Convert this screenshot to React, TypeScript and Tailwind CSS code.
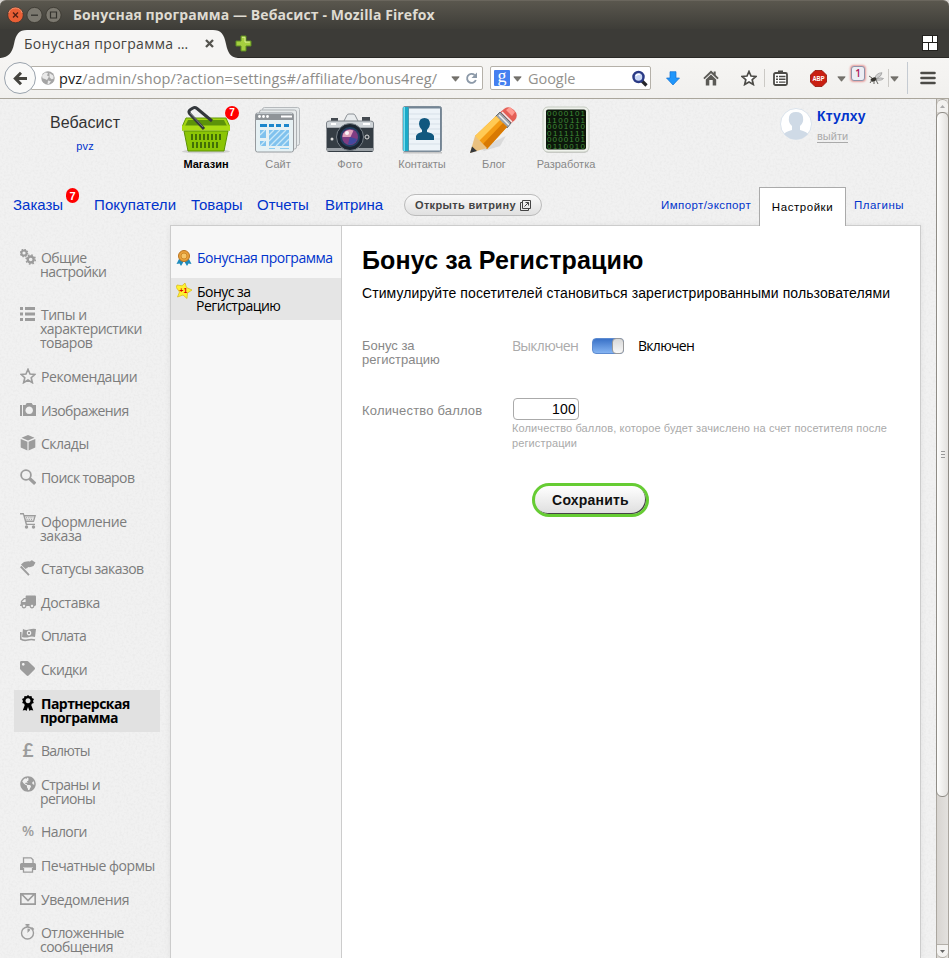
import type { ReactNode } from "react";
import { FaTruck, FaTag, FaGlobeAmericas } from "react-icons/fa";

const UI = "font-['Open_Sans','Noto_Sans',sans-serif]";
const ARIAL = "font-['Liberation_Sans',Arial,sans-serif]";

function Ico({ children, size = 16 }: { children: ReactNode; size?: number }) {
  return (
    <svg width={size} height={size} viewBox="0 0 16 16" fill="currentColor" className="block shrink-0">
      {children}
    </svg>
  );
}

function Caret() {
  return (
    <svg width="9" height="6" viewBox="0 0 9 6" className="block shrink-0">
      <path d="M.8 .8h7.400L4.500 5.300z" fill="#77756f" stroke="#55534e" strokeWidth=".6" />
    </svg>
  );
}

function TitleBar() {
  return (
    <div className="flex h-[29px] shrink-0 items-center rounded-t-[6px] border-t border-[#6a665d] bg-linear-to-b from-[#5a574e] to-[#3e3d38] pl-[7px]">
      <svg width="56" height="18" viewBox="0 0 56 18" className="shrink-0">
        <circle cx="8.5" cy="9" r="7.8" fill="#ea5f35" stroke="#38342f" strokeWidth=".8" />
        <path d="M1.8 7a7 7 0 0 1 13.4 0" fill="none" stroke="#f5906c" strokeWidth="1" />
        <path d="M6 6.5l5 5m0-5l-5 5" stroke="#522013" strokeWidth="1.4" />
        <circle cx="27.5" cy="9" r="7.6" fill="#7c7970" stroke="#38362f" strokeWidth=".8" />
        <path d="M24 9.2h7" stroke="#33322d" strokeWidth="1.3" />
        <circle cx="46.5" cy="9" r="7.6" fill="#7c7970" stroke="#38362f" strokeWidth=".8" />
        <path d="M43.5 6h6v6h-6z" fill="none" stroke="#33322d" strokeWidth="1.2" />
      </svg>
      <span className={`${UI} ml-[10px] text-[14px] leading-[20px] font-bold tracking-[0.1px] whitespace-nowrap text-[#dfdbd2]`}>
        Бонусная программа — Вебасист - Mozilla Firefox
      </span>
    </div>
  );
}

function TabBar() {
  return (
    <div className="flex h-[29px] shrink-0 border-b border-[#2a2926] bg-[#3c3b37]">
      <div className="relative h-[29px] w-[238px] shrink-0">
        <svg width="238" height="30" viewBox="0 0 238 30" className="absolute top-0 left-0">
          <path d="M0 29C9 28 12 24 14 15C16 5 19 1 27 1H213C221 1 224 5 226 15C228 24 230 28 238 29V30H0z" fill="#f6f5f4" />
        </svg>
        <div className="relative flex h-[29px] items-center pl-[24px]">
          <span className={`${UI} w-[166px] text-[14px] leading-[20px] tracking-[0.3px] whitespace-nowrap text-[#45443f]`}>
            Бонусная программа …
          </span>
          <svg width="9" height="9" viewBox="0 0 9 9" className="ml-[15px]">
            <path d="M1 1l7 7M8 1L1 8" stroke="#55544f" strokeWidth="2.3" />
          </svg>
        </div>
      </div>
      <svg width="17" height="17" viewBox="0 0 17 17" className="mt-[6px] -ml-[3px]">
        <path d="M6 1h5v5h5v5h-5v5H6v-5H1V6h5z" fill="#a5cf3f" stroke="#5c8c22" />
        <path d="M7 2.3h3v4.8h4.8" fill="none" stroke="#d9ec92" />
      </svg>
      <svg width="16" height="16" viewBox="0 0 16 16" className="mt-[6px] mr-[11px] ml-auto">
        <path d="M0 0h16v16H0z" fill="#22211e" />
        <path d="M1 1h9v6H1zM11 1h4v6h-4zM1 8h5v7H1zM7 8h8v7H7z" fill="#fff" />
      </svg>
    </div>
  );
}

function Toolbar() {
  return (
    <div className="flex h-[41px] shrink-0 items-center border-b border-[#aaa69c] bg-linear-to-b from-[#f6f5f3] to-[#f1f0ee]">
      <div className="z-10 ml-[4px] flex h-[32px] w-[32px] shrink-0 items-center justify-center rounded-full border border-[#9aa3ad] bg-[#f9f9f8]">
        <svg width="15" height="15" viewBox="0 0 15 15">
          <path d="M14 7.5H3M8 1.8L2.3 7.5L8 13.2" fill="none" stroke="#45443f" strokeWidth="3" />
        </svg>
      </div>
      <div className="-ml-[5px] flex h-[24px] w-[452px] shrink-0 items-center rounded-r-[2px] border border-[#b5b1a9] bg-white">
        <svg width="14" height="14" viewBox="0 0 14 14" className="ml-[9px] shrink-0">
          <circle cx="7" cy="7" r="6.7" fill="#a5a5a5" />
          <path d="M1 4.5l3-3 3 .6-1 2.5 2 .8-2 3.5-2-.8-2.5-.8zM8.5 2l4 2.8v3l-2 .5-2-2zM7 9.5l3 .8-2 2.8-1.500 0z" fill="#e9e9e9" />
        </svg>
        <span className={`${UI} ml-[4px] w-[387px] pt-[2px] text-[14.5px] leading-[20px] tracking-[0.12px] whitespace-nowrap text-[#8d8c89]`}>
          <span className="text-[#222]">pvz</span>/admin/shop/?action=settings#/affiliate/bonus4reg/
        </span>
        <span className="ml-[5px] pt-[2px]"><Caret /></span>
        <svg width="13" height="13" viewBox="0 0 13 13" className="ml-[5px] shrink-0">
          <path d="M9.600 3A4.500 4.500 0 1 0 10.800 8" fill="none" stroke="#8c99a8" strokeWidth="1.900" />
          <path d="M12 .5v5.500H6.500z" fill="#8c99a8" />
        </svg>
      </div>
      <div className="ml-[7px] flex h-[24px] w-[161px] shrink-0 items-center rounded-[2px] border border-[#b5b1a9] bg-white">
        <div className="ml-[3px] flex h-[16px] w-[16px] items-center justify-center rounded-[1px] bg-[#4580f0] font-['Liberation_Serif',serif] text-[18px] leading-[12px] text-white">
          <span className="-mt-[5px]">g</span>
        </div>
        <span className="ml-[3px] pt-[2px]"><Caret /></span>
        <span className={`${UI} ml-[6px] w-[103px] pt-[2px] text-[14.5px] leading-[20px] tracking-[-0.05px] text-[#93918d]`}>Google</span>
        <svg width="17" height="17" viewBox="0 0 17 17" className="shrink-0">
          <path d="M11 11l4.500 4.500" stroke="#26262b" strokeWidth="3.200" />
          <circle cx="7.500" cy="7" r="5" fill="#c9d7f5" stroke="#2b3b86" strokeWidth="2.500" />
          <path d="M5 6a3 3 0 0 1 4-1.500" fill="none" stroke="#fff" strokeWidth="1.500" />
        </svg>
      </div>
      <svg width="14" height="15" viewBox="0 0 14 15" className="ml-[15px] shrink-0">
        <path d="M4 .7h6V7h3.500L7 14 .5 7H4z" fill="#1f96fb" stroke="#1371d3" strokeWidth=".7" />
      </svg>
      <svg width="16" height="16" viewBox="0 0 16 16" className="ml-[23px] shrink-0" fill="#5b5a56">
        <path d="M8 .5L.3 8l1.300 1.300L8 3.200l6.400 6.100L15.700 8l-3-2.900V1.500h-2v1.600z" />
        <path d="M8 4.600L2.800 9.600V15.500H6.300V10h3.400v5.500h3.500V9.600z" />
      </svg>
      <svg width="16" height="16" viewBox="0 0 16 16" className="ml-[22px] shrink-0">
        <path d="M8 1.500l2 4.500 4.900.5-3.700 3.200 1.100 4.800L8 12l-4.300 2.500 1.100-4.800L1.100 6.500 6 6z" fill="#fff" stroke="#4c4b47" strokeWidth="1.700" />
      </svg>
      <div className="ml-[7px] h-[18px] w-px shrink-0 bg-[#cbc9c5]" />
      <svg width="15" height="16" viewBox="0 0 15 16" className="ml-[8px] shrink-0">
        <rect x="1" y="3" width="13" height="12" rx="1.500" fill="#fff" stroke="#4c4b47" strokeWidth="1.800" />
        <path d="M5 .5h5V4H5z" fill="#4c4b47" />
        <path d="M3 6.500h2M3 9.300h2M3 12.100h2M6 6.500h6.500M6 9.300h6.500M6 12.100h6.500" stroke="#4c4b47" strokeWidth="1.400" />
      </svg>
      <svg width="17" height="17" viewBox="0 0 17 17" className="ml-[22px] shrink-0 overflow-visible">
        <path d="M5 .5h7L16.500 5v7L12 16.500H5L.5 12V5z" fill="#c91f12" stroke="#8f1209" strokeWidth=".8" />
        <text x="2.500" y="11.300" textLength="12" lengthAdjust="spacingAndGlyphs" fontSize="8" fontWeight="bold" fontFamily="Liberation Sans" fill="#fff">ABP</text>
      </svg>
      <span className="ml-[10px] pt-[2px]"><Caret /></span>
      <div className="-mt-[9px] ml-[5px] flex h-[15px] w-[14px] shrink-0 items-center justify-center rounded-[3px] border border-[#8f93a8] bg-[#eceef4] font-['Open_Sans',sans-serif] text-[10px] leading-[13px] font-semibold text-[#b01554] shadow-[0_0_2px_1px_#e79b9b]">
        1
      </div>
      <svg width="15" height="13" viewBox="0 0 15 13" className="ml-[4px] shrink-0">
        <path d="M6 6Q7 1 13 .7Q13 4 7 7zM7 7q5-2 7.500-.5Q13 9 7 8z" fill="#cfcfcf" stroke="#8b8b8b" strokeWidth=".6" />
        <ellipse cx="4.500" cy="7.500" rx="3" ry="1.900" fill="#35342f" transform="rotate(-20 4.500 7.500)" />
        <path d="M0 4l3 2M1 11l2-3M5 12V9M9 12L7 8" stroke="#55544f" strokeWidth=".9" />
      </svg>
      <div className="ml-[4px] h-[18px] w-px shrink-0 bg-[#cbc9c5]" />
      <span className="ml-[1px] pt-[2px]"><Caret /></span>
      <div className="ml-[8px] h-[32px] w-px shrink-0 bg-[#c5cbd2]" />
      <svg width="16" height="14" viewBox="0 0 16 14" className="ml-[12px] shrink-0">
        <path d="M1.500 2h13M1.500 7h13M1.500 12h13" stroke="#4c4b47" strokeWidth="2.600" strokeLinecap="round" />
      </svg>
    </div>
  );
}

const BINARY = ["0000101", "1100111", "0001010", "0111111", "0000101", "0110010"];

const apps: { name: string; art: ReactNode }[] = [
  {
    name: "Магазин",
    art: (
      <>
        <ellipse cx="24" cy="45.500" rx="24" ry="2" fill="#bbb" opacity=".6" />
        <path d="M4 12h40l4 9v3H0v-3z" fill="#a3d511" stroke="#63990a" />
        <path d="M6 14h36l3 6H3z" fill="#5c930a" />
        <path d="M2 25h44l-4 20H6z" fill="#8bc505" stroke="#5c9207" />
        <path d="M0 19.500h48v5H0z" fill="#a9dc14" />
        <path d="M10 28v6M14 28v6M18 28v6M22 28v6M26 28v6M30 28v6M34 28v6M38 28v6M11 36v6M15 36v6M19 36v6M23 36v6M27 36v6M31 36v6M35 36v6" stroke="#426f06" strokeWidth="2" />
        <path d="M22 23L7.500 7.500Q6 5 8.500 3.500L11 2Q13 1 15 2.500L30 15" fill="none" stroke="#34383c" strokeWidth="3" strokeLinejoin="round" />
        <path d="M21 21L8 7" stroke="#767b80" />
      </>
    ),
  },
  {
    name: "Сайт",
    art: (
      <>
        <rect x="8.500" y="1.500" width="37" height="38" rx="2" fill="#e6eaeb" stroke="#b5b9bc" />
        <rect x="5.500" y="4" width="37" height="39" rx="2" fill="#e6eaeb" stroke="#adb1b4" />
        <rect x="1.500" y="7" width="38" height="39" rx="2" fill="#e6f1f4" stroke="#969a9e" />
        <path d="M2 8h37v6H2z" fill="#8f9498" />
        <circle cx="5.500" cy="10.500" r="1.400" fill="#fff" /><circle cx="9.500" cy="10.500" r="1.400" fill="#fff" /><circle cx="13.500" cy="10.500" r="1.400" fill="#fff" />
        <path d="M27 9.500h11v2H27z" fill="#fff" />
        <path d="M6 18h7v3H6zM15 18h5v3h-5zM22 18h5v3h-5zM30 18h5v3h-5z" fill="#1b87cc" />
        <path d="M6 24h6v8H6zM6 35h6v5H6zM15 24h20v16H15z" fill="#80c2ee" />
        <path d="M15 29l5-5M15 35l11-11M16 40l16-16M22 40l13-13M28 40l7-7M6 29l5-5M6 40l5-5" stroke="#cbe9f8" strokeWidth="1.300" />
        <path d="M15 42.500h6M26 42.500h9" stroke="#8ecdf1" />
      </>
    ),
  },
  {
    name: "Фото",
    art: (
      <>
        <path d="M5 12h7v4H5zM36 11h8v5h-8z" fill="#444a50" />
        <path d="M17 17l4-8q.5-1 2-1h4q1.500 0 2 1l4 8z" fill="#e9ecee" stroke="#8b9095" />
        <path d="M0.500 17q0-2 3-2h41q3 0 3 2v5H.5z" fill="#cfd4d8" stroke="#7e848a" />
        <path d="M.5 22h47v22q0 2-2 2H3q-2 0-2.500-2z" fill="#353d44" />
        <path d="M1 42h46v3H1z" fill="#9aa0a5" />
        <circle cx="24" cy="31" r="13.500" fill="#1c2530" stroke="#788087" />
        <circle cx="24" cy="31" r="10" fill="#233f62" />
        <circle cx="24" cy="31" r="8" fill="#7f3d83" />
        <path d="M16.500 31a7.500 7.500 0 0 1 11-6.500l-3 6.500z" fill="#dfa1ba" />
        <path d="M24 31l7 2a7 7 0 0 1-9 5z" fill="#40499f" />
        <circle cx="21" cy="27" r="2" fill="#fff" opacity=".9" />
        <circle cx="41" cy="31" r="2" fill="none" stroke="#ddd" /><circle cx="6" cy="33" r="1.500" fill="#ddd" />
        <path d="M5 18h5M37 18h7" stroke="#fff" strokeWidth="2" />
      </>
    ),
  },
  {
    name: "Контакты",
    art: (
      <>
        <path d="M5 46h39v1.500H5z" fill="#aaa" opacity=".6" />
        <rect x="5" y="0.500" width="38.500" height="45" rx="2" fill="#738494" stroke="#7d8c99" />
        <path d="M11 2.500h31v42H11z" fill="#edf3f8" />
        <path d="M11 8h31M11 13h31M11 18h31M11 23h31M11 28h31M11 33h31M11 38h31" stroke="#ced9e3" strokeWidth=".7" />
        <path d="M5 1h5.500v44H5z" fill="#1aaac8" /><path d="M5.500 1H7v44H5.500z" fill="#7bdced" />
        <path d="M18 34v-4q1-3 6-4v-2q-3-3-3-6q0-6 5.500-6T32 18q0 3-3 6v2q6 1 7 4v4z" fill="#11587f" />
      </>
    ),
  },
  {
    name: "Блог",
    art: (
      <>
        <path d="M10 42l26-12-6 10-16 5z" fill="#ccc" opacity=".6" />
        <path d="M34 3Q38-1 44 4Q49 9 45 14L39 19L28 8z" fill="#e45e55" />
        <path d="M36 4l4-3 5 5-3 4z" fill="#ff9b92" />
        <path d="M30 6L41 17L37 22L25 11z" fill="#9ba2a8" stroke="#656b70" />
        <path d="M29 9l10 10M32 6l10 10" stroke="#eee" strokeWidth="1.500" />
        <path d="M26 10L37 21L17 43L5 30z" fill="#f39a13" />
        <path d="M26 10L30 14L9 35L5 30z" fill="#ffca55" /><path d="M33 17L37 21L17 43L13 38z" fill="#d87903" />
        <path d="M5 30L17 42L0 47z" fill="#eac181" />
        <path d="M2 40.500L7 45L0 47z" fill="#34373b" />
      </>
    ),
  },
  {
    name: "Разработка",
    art: (
      <>
        <rect x="1.500" y="2" width="45.500" height="45" rx="5" fill="#aaa" opacity=".6" />
        <rect x="1" y="1" width="46" height="45" rx="5" fill="#eff2ec" stroke="#c7ccc2" />
        <rect x="4" y="3.500" width="40" height="40" rx="2" fill="#0c170b" />
        <text fontSize="8" fontFamily="Liberation Sans" fill="#3f8a36">
          {BINARY.map((row, i) => (
            <tspan key={i} x="5" y={10 + i * 6.6} textLength="38">{row}</tspan>
          ))}
        </text>
      </>
    ),
  },
];

function Launcher() {
  return (
    <div className={`${ARIAL} flex h-[84px] shrink-0`}>
      <div className="flex w-[170px] shrink-0 flex-col items-center pt-[14px]">
        <span className="text-[16px] leading-[20px] tracking-[0.1px] text-[#333]">Вебасист</span>
        <span className="mt-[6px] text-[11px] leading-[14px] tracking-[0.2px] text-[#03c]">pvz</span>
      </div>
      {apps.map((app, i) => (
        <div key={app.name} className="relative flex w-[72px] shrink-0 flex-col items-center pt-[7px]">
          <svg width="48" height="48" viewBox="0 0 48 48" className="block">{app.art}</svg>
          <span className={`mt-[3px] text-[11px] leading-[14px] ${i === 0 ? "font-bold text-black" : "text-[#888]"}`}>{app.name}</span>
          {i === 0 && (
            <span className="absolute top-[7px] left-[55px] flex h-[14px] w-[14px] items-center justify-center rounded-full bg-[#f00] text-[10px] leading-[14px] font-bold text-white">7</span>
          )}
        </div>
      ))}
      <svg width="32" height="32" viewBox="0 0 32 32" className="mt-[9px] ml-[178px] shrink-0">
        <circle cx="16" cy="16" r="15.500" fill="#fff" stroke="#dbe3ec" />
        <path d="M4 26q1-2 8-4v-4Q8 15 9 9Q10 4 16 4T23 9q1 6-3 9v4q7 2 8 4Q23 31.500 16 31.500T4 26z" fill="#cfdae6" />
      </svg>
      <div className="ml-[5px] flex flex-col items-start pt-[9px]">
        <span className="text-[14px] leading-[17px] font-bold tracking-[0.1px] text-[#03c]">Ктулху</span>
        <span className="mt-[6px] border-b border-[#aaa] text-[11px] leading-[11px] text-[#aaa]">выйти</span>
      </div>
    </div>
  );
}

function Nav() {
  return (
    <div className={`${ARIAL} flex h-[42px] shrink-0 items-start text-[15px] leading-[18px] whitespace-nowrap text-[#03c]`}>
      <span className="mt-[13px] ml-[13px] w-[53px]">Заказы</span>
      <span className="mt-[5px] flex h-[15px] w-[13px] items-center justify-center rounded-full bg-[#f00] text-[11px] font-bold text-white">7</span>
      <span className="mt-[13px] ml-[15px] w-[97px] tracking-[0.1px]">Покупатели</span>
      <span className="mt-[13px] w-[66px]">Товары</span>
      <span className="mt-[13px] w-[68px]">Отчеты</span>
      <span className="mt-[13px] w-[79px] tracking-[-0.1px]">Витрина</span>
      <button className="mt-[11px] flex h-[22px] w-[138px] items-center rounded-full border border-[#bbb] bg-linear-to-b from-[#fafafa] to-[#e0e0e0] pl-[10px] text-left text-[11px] font-bold text-[#444]">
        <span className="w-[105px] tracking-[0.33px]">Открыть витрину</span>
        <svg width="11" height="11" viewBox="0 0 11 11" fill="none" stroke="#444">
          <path d="M2.500 2.500h-2v8h8v-2" /><path d="M2.500 .5h8v8h-8z" /><path d="M4.500 6.500l4-4M5.500 2.500h3v3" />
        </svg>
      </button>
      <span className="mt-[13px] ml-[119px] w-[98px] text-[11.5px] tracking-[0.42px]">Импорт/экспорт</span>
      <div className="z-10 mt-[4px] flex h-[39px] w-[87px] items-center justify-center border border-b-0 border-[#aaa] bg-white text-[11.5px] tracking-[0.55px] text-black">Настройки</div>
      <span className="mt-[13px] ml-[8px] text-[11.5px] tracking-[0.5px]">Плагины</span>
    </div>
  );
}

type Item = { lines: string[]; icon: ReactNode; track: string; gap?: boolean; active?: boolean };

const items: Item[] = [
  { lines: ["Общие", "настройки"], icon: <Ico><circle cx="4" cy="4" r="2.600" fill="none" stroke="currentColor" strokeWidth="2" /><circle cx="4" cy="4" r="3.700" fill="none" stroke="currentColor" strokeWidth="1.200" strokeDasharray="1.400 1.506" /><circle cx="10.700" cy="10.500" r="3" fill="none" stroke="currentColor" strokeWidth="2.400" /><circle cx="10.700" cy="10.500" r="4.600" fill="none" stroke="currentColor" strokeWidth="1.500" strokeDasharray="1.700 1.913" /></Ico>, track: "tracking-[-0.62px]", gap: true },
  { lines: ["Типы и", "характеристики", "товаров"], icon: <Ico><path d="M0 1h3v3H0zM5 1h10v3H5zM0 6.500h3v3H0zM5 6.500h10v3H5zM0 12h3v3H0zM5 12h10v3H5z" /></Ico>, track: "tracking-[-0.5px]" },
  { lines: ["Рекомендации"], icon: <Ico><path d="M8 1.300l2 4.700 5 .4-3.800 3.300 1.200 5L8 12l-4.400 2.700 1.200-5L1 6.400 6 6z" fill="none" stroke="currentColor" strokeWidth="1.600" /></Ico>, track: "tracking-[-0.43px]" },
  { lines: ["Изображения"], icon: <Ico><path d="M0 3h2v11H0zM3 3h2.500l1.200-2h5l1.200 2H16v11H3zM9.200 4.500a3.800 3.800 0 1 0 .01 0z" fillRule="evenodd" /><circle cx="9.200" cy="8.300" r="2.400" fill="none" stroke="#f3f3f3" /></Ico>, track: "tracking-[-0.6px]" },
  { lines: ["Склады"], icon: <Ico><path d="M8 0l6.500 2.800L8 5.600 1.500 2.800zM.7 4l6.700 2.800v8.700L.7 12.500zM15.300 4L8.600 6.800v8.700l6.700-3z" /></Ico>, track: "tracking-[-0.5px]" },
  { lines: ["Поиск товаров"], icon: <Ico><circle cx="6" cy="6" r="4.900" fill="none" stroke="currentColor" strokeWidth="1.800" /><path d="M9.500 9.500l5.700 5.300" stroke="currentColor" strokeWidth="3.300" /></Ico>, track: "tracking-[-0.58px]", gap: true },
  { lines: ["Оформление", "заказа"], icon: <Ico><path d="M0 0h3.800l.6 2H16l-2 7H6.500l.5 1.800h8V12H5.800L3 1.500H0zM5 3.500l1.200 4h7L14.300 3.500z" fillRule="evenodd" /><path d="M6 4.800h7.500M6.500 6.400h7" stroke="currentColor" strokeDasharray="1.200 1" /><circle cx="6.500" cy="14" r="1.700" /><circle cx="13.500" cy="14" r="1.700" /></Ico>, track: "tracking-[-0.4px]" },
  { lines: ["Статусы заказов"], icon: <Ico><path d="M1 4.500L4 2q4-1 6-.5 2-2 3-.5l2.500 1.500L13.500 6q-3 1.500-5 1L5.500 9z" /><path d="M.7 6.500L9 15.200" stroke="currentColor" strokeWidth="1.900" /></Ico>, track: "tracking-[-0.54px]" },
  { lines: ["Доставка"], icon: <FaTruck size={16} className="-scale-x-100" />, track: "tracking-[-0.4px]" },
  { lines: ["Оплата"], icon: <Ico><path d="M3 2q3 1.500 6 .5T16 2l-1 8q-3-1-6 0t-7 0zM9 3.500c-3 0-3 5 0 5s3-5 0-5z" fillRule="evenodd" /><path d="M8 5h2v2H8z" /><path d="M.7 5v7q3 2 6.800 1T15 13" fill="none" stroke="currentColor" strokeWidth="1.700" /></Ico>, track: "tracking-[-0.8px]" },
  { lines: ["Скидки"], icon: <FaTag size={15} />, track: "tracking-[-0.5px]" },
  { lines: ["Партнерская", "программа"], icon: <Ico><path d="M8 0l1.500 1.300 2-.3.500 2 2 1-1 2 .8 2-2 .7-.5 1.500 2 5.300-2.500-.5-1.300 1-1.500-4-1.500 4-1.300-1-2.500.5 2-5.300L4.200 8.700l-2-.7L3 6 2 4l2-1 .5-2 2 .3zM8 3.200a2.500 2.500 0 1 0 .01 0z" fillRule="evenodd" /></Ico>, track: "tracking-[-0.53px]", active: true },
  { lines: ["Валюты"], icon: <span className="flex h-[16px] w-[16px] items-center justify-center font-['Lato',sans-serif] text-[19px] leading-[16px] font-bold">£</span>, track: "tracking-[-0.85px]" },
  { lines: ["Страны и", "регионы"], icon: <FaGlobeAmericas size={16} />, track: "tracking-[-0.6px]" },
  { lines: ["Налоги"], icon: <span className="flex h-[16px] w-[16px] items-center justify-center font-['Open_Sans',sans-serif] text-[14px] leading-[16px] font-semibold">%</span>, track: "tracking-[-0.6px]" },
  { lines: ["Печатные формы"], icon: <Ico><path d="M3.500 6V.8h7.500l2 2V6" fill="none" stroke="currentColor" strokeWidth="1.300" /><path d="M1.500 6h13Q16 6 16 7.500V13h-3v-2.500H3V13H0V7.500Q0 6 1.500 6z" /><path d="M3.500 11v4.200h9V11" fill="none" stroke="currentColor" strokeWidth="1.300" /></Ico>, track: "tracking-[-0.45px]" },
  { lines: ["Уведомления"], icon: <Ico><path d="M.8 2.800h14.400v10.400H.8zM2 3.500l6 6 6-6" fill="none" stroke="currentColor" strokeWidth="1.700" /></Ico>, track: "tracking-[-0.42px]" },
  { lines: ["Отложенные", "сообщения"], icon: <Ico><circle cx="7.500" cy="9" r="6" fill="none" stroke="currentColor" strokeWidth="1.400" /><path d="M5.500 0h4v1.500H8.500V3h-2V1.500h-1zM7.500 9V4.500a4.500 4.500 0 0 1 3 1.300z" /><path d="M11.500 3.500l2.300 2" stroke="currentColor" strokeWidth="1.600" /></Ico>, track: "tracking-[-0.55px]" },
];

function Sidebar() {
  return (
    <nav className={`${UI} flex w-[170px] shrink-0 flex-col pt-[18.6px] pl-[14px]`}>
      {items.map((it) => (
        <div
          key={it.lines[0]}
          className={`flex w-[146px] shrink-0 py-[7px] pl-[6px] text-[14px] leading-[14px] ${it.gap ? "mb-[15.8px]" : "mb-[5.6px]"} ${it.active ? "bg-[#e1e1e1] font-bold text-black" : "text-[#7c7c7c]"}`}
        >
          <span className={`-mt-[2px] flex h-[16px] w-[20px] shrink-0 items-center ${it.active ? "" : "text-[#9c9c9c]"}`}>{it.icon}</span>
          <span className={`whitespace-nowrap ${it.track}`}>
            {it.lines.map((l) => (<span key={l} className="block first:pl-px">{l}</span>))}
          </span>
        </div>
      ))}
    </nav>
  );
}

function SubMenu() {
  return (
    <div className={`${UI} w-[171px] shrink-0 border-r border-[#ccc] bg-[#f7f7f7] pt-[18px] text-[14px] leading-[14px] whitespace-nowrap`}>
      <div className="flex h-[34px] pt-[7px] pl-[5px] text-[#03c]">
        <svg width="16" height="16" viewBox="0 0 16 16" className="-mt-[1px] mr-[5px] shrink-0">
          <path d="M3 9L.5 14l3-.5L5 16l3-5 3 5 1.500-2.500 3 .5L13 9z" fill="#1e8bbc" />
          <circle cx="8" cy="6" r="5.500" fill="#e9a13b" stroke="#b97420" />
          <circle cx="8" cy="6" r="3" fill="#f6c568" stroke="#cf8b2b" />
        </svg>
        <span className="tracking-[-0.46px]">Бонусная программа</span>
      </div>
      <div className="flex h-[42px] bg-[#e5e5e5] pt-[7px] pl-[5px] text-black">
        <svg width="16" height="16" viewBox="0 0 16 16" className="-mt-[2px] mr-[4px] shrink-0">
          <path d="M1 2l5 .8L9 0l1.500 4.500L16 7l-4.500 3L11 15.500 7 12l-5.500 2L3.500 9 .3 4.500z" fill="#fff22e" stroke="#d9bd26" strokeWidth=".8" />
          <text x="7.300" y="10.300" fontSize="7" textAnchor="middle" fontWeight="bold" fontFamily="Liberation Sans" fill="#e00000">+1</text>
        </svg>
        <span className="tracking-[-0.52px]"><span className="block pl-px">Бонус за</span><span className="block">Регистрацию</span></span>
      </div>
    </div>
  );
}

function SettingsForm() {
  return (
    <main className={`${ARIAL} flex flex-1 flex-col bg-white pl-[20px]`}>
      <h1 className="mt-[19px] text-[25px] leading-[30px] font-bold tracking-[0.15px] text-black">Бонус за Регистрацию</h1>
      <p className="mt-[9px] text-[14px] leading-[18px] tracking-[0.09px] whitespace-nowrap text-black">Стимулируйте посетителей становиться зарегистрированными пользователями</p>
      <div className="mt-[37px] flex h-[28px] text-[13px] leading-[14px] text-[#888]">
        <span className="w-[150px]">Бонус за<br />регистрацию</span>
        <span className={`${UI} -mt-px w-[80px] text-[14px] leading-[16px] tracking-[-0.72px] text-[#aaa]`}>Выключен</span>
        <span className="-mt-px flex h-[16px] w-[32px] justify-end rounded-[4px] border border-[#5d8bd0] bg-linear-to-b from-[#3a72c8] to-[#85b4f2]">
          <span className="-mt-px -mr-px h-[16px] w-[12px] rounded-[4px] border border-[#999] bg-linear-to-b from-[#d8d8d8] to-[#f8f8f8]" />
        </span>
        <span className={`${UI} -mt-px ml-[14px] text-[14px] leading-[16px] tracking-[-0.72px] text-black`}>Включен</span>
      </div>
      <div className="mt-[31px] flex text-[13px] text-[#888]">
        <span className="mt-[4px] w-[150px] leading-[18px] tracking-[0.18px]">Количество баллов</span>
        <div className="flex flex-col">
          <div className="ml-px flex h-[22px] w-[66px] items-center justify-end rounded-[4px] border border-[#aaa] bg-white pr-[2px] text-[14px] tracking-[0.2px] text-black">100</div>
          <span className="mt-px w-[390px] text-[11px] leading-[15px] tracking-[0.12px] text-[#aaa]">Количество баллов, которое будет зачислено на счет посетителя после регистрации</span>
        </div>
      </div>
      <button className="mt-[32px] ml-[170px] flex h-[34px] w-[117px] items-center justify-center rounded-full border-[3px] border-[#66cc33] bg-linear-to-b from-white to-[#dedede] text-[14px] font-bold tracking-[0.2px] text-[#111] shadow-[inset_-1px_-1px_0_#444]">
        Сохранить
      </button>
    </main>
  );
}

function Scrollbar() {
  return (
    <div className="flex w-[13px] shrink-0 flex-col border-x border-[#aaa69f] bg-linear-to-r from-[#d8d5d1] to-[#e3e1de]">
      <div className="flex h-[13px] items-center justify-center rounded-t-[6px] border-t border-[#aaa69f] bg-[#f2f1ef]">
        <svg width="5" height="3"><path d="M0 3L2.500 0 5 3z" fill="#aaa" /></svg>
      </div>
      <div className="-mx-px flex h-[685px] flex-col items-center justify-center gap-[2px] rounded-[6px] border border-[#8f8c86] bg-linear-to-r from-[#fdfdfc] to-[#e3e1de]">
        <div className="h-px w-[4px] bg-[#999]" /><div className="h-px w-[4px] bg-[#999]" /><div className="h-px w-[4px] bg-[#999]" />
      </div>
      <div className="mt-auto flex h-[14px] items-center justify-center rounded-b-[6px] border-y border-[#b4b0a9] bg-[#f4f3f1]">
        <svg width="5" height="3"><path d="M0 0h5L2.500 3z" fill="#666" /></svg>
      </div>
    </div>
  );
}

export default function App() {
  return (
    <div className="flex h-[958px] w-[949px] flex-col overflow-hidden bg-[#d8d5d1]">
      <TitleBar />
      <TabBar />
      <Toolbar />
      <div className="flex min-h-0 flex-1">
        <div className="relative isolate flex w-[936px] shrink-0 flex-col overflow-hidden bg-[#f1f1f1]">
          <svg width="936" height="859" className="pointer-events-none absolute inset-0 -z-10">
            <filter id="paper">
              <feTurbulence type="fractalNoise" baseFrequency=".45" numOctaves="2" seed="3" />
              <feColorMatrix values="0 0 0 0 .5  0 0 0 0 .5  0 0 0 0 .5  .25 0 0 0 -.1" />
            </filter>
            <rect width="936" height="859" filter="url(#paper)" />
          </svg>
          <Launcher />
          <Nav />
          <div className="flex min-h-0 flex-1">
            <Sidebar />
            <div className="flex w-[751px] shrink-0 border border-b-0 border-[#ccc] shadow-[0_0_6px_#0001]">
              <SubMenu />
              <SettingsForm />
            </div>
          </div>
        </div>
        <Scrollbar />
      </div>
    </div>
  );
}
